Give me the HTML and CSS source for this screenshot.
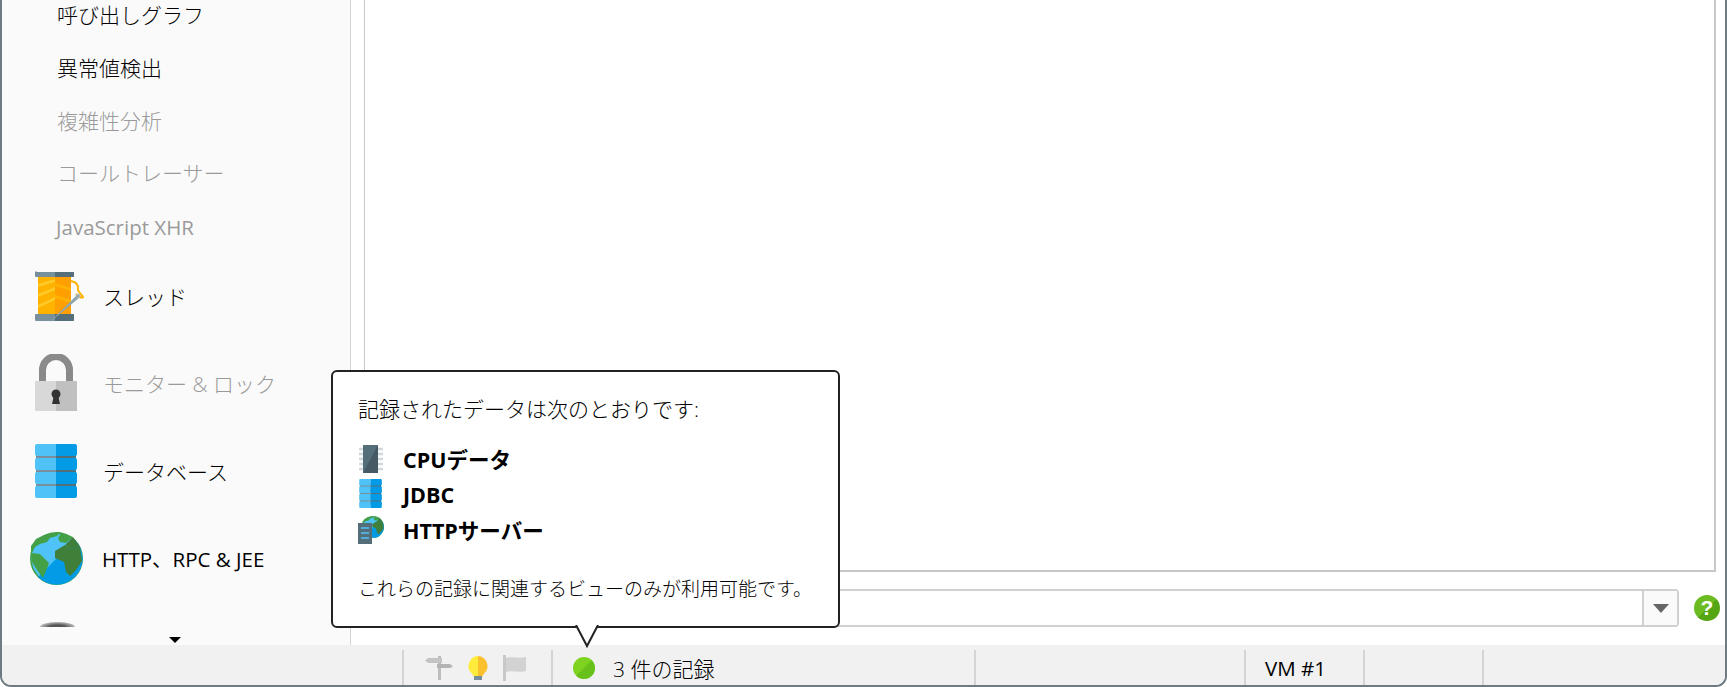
FILE: index.html
```html
<!DOCTYPE html>
<html lang="ja">
<head>
<meta charset="utf-8">
<title>Profiler</title>
<link rel="stylesheet" href="styles.css">
</head>
<body>
<svg class="defs" width="0" height="0">
  <defs>
    <symbol id="db" viewBox="0 0 42 54">
      <rect x="1" y="8" width="20" height="40" fill="#78909c"/>
      <rect x="21" y="8" width="20" height="40" fill="#546e7a"/>
      <g id="dbslabs">
        <path d="M2 0H21V12H2a2 2 0 0 1-2-2V2a2 2 0 0 1 2-2z" fill="#4fc3f7"/>
        <path d="M21 0H40a2 2 0 0 1 2 2V10a2 2 0 0 1-2 2H21z" fill="#039be5"/>
        <path d="M2 14H21V26H2a2 2 0 0 1-2-2V16a2 2 0 0 1 2-2z" fill="#4fc3f7"/>
        <path d="M21 14H40a2 2 0 0 1 2 2V24a2 2 0 0 1-2 2H21z" fill="#039be5"/>
        <path d="M2 28H21V40H2a2 2 0 0 1-2-2V30a2 2 0 0 1 2-2z" fill="#4fc3f7"/>
        <path d="M21 28H40a2 2 0 0 1 2 2V38a2 2 0 0 1-2 2H21z" fill="#039be5"/>
        <path d="M2 42H21V54H2a2 2 0 0 1-2-2V44a2 2 0 0 1 2-2z" fill="#4fc3f7"/>
        <path d="M21 42H40a2 2 0 0 1 2 2V52a2 2 0 0 1-2 2H21z" fill="#039be5"/>
      </g>
    </symbol>
    <symbol id="globe" viewBox="0 0 53 53">
      <circle cx="26.5" cy="26.5" r="26.5" fill="#43a047"/>
      <circle cx="26.5" cy="26.5" r="25" fill="#4fc3f7"/>
      <path d="M45 8A25.500 25.500 0 0 1 8 45z" fill="#039be5"/>
      <path d="M14 3L31 0L27 4L20 6L17 10L10 12L5 15L3 19L1 21L1 14L6 7z" fill="#43a047"/>
      <path d="M1 21L10 22L19 31L18 34L13 46L7 38L2 30z" fill="#43a047"/>
      <path d="M31 1L43 5L36 11L30 10L28 6z" fill="#43a047"/>
      <path d="M25 19L35 13L40 17L50 15L52 29L46 38L40 44L36 40L34 30L25 26z" fill="#3f7f3a"/>
      <path d="M43 5L50 15L40 17L35 13z" fill="#3f7f3a"/>
    </symbol>
  </defs>
</svg>

<div class="window">
  <div class="body-row">
    <aside class="sidebar">
      <ul class="nav">
        <li class="sub">呼び出しグラフ</li>
        <li class="sub">異常値検出</li>
        <li class="sub off">複雑性分析</li>
        <li class="sub off">コールトレーサー</li>
        <li class="sub off latin">JavaScript XHR</li>
        <li class="group">
          <svg class="gicon" width="50" height="52" viewBox="0 0 50 52">
            <rect x="3" y="7" width="17" height="37" fill="#ffb300"/>
            <rect x="20" y="7" width="16" height="37" fill="#ffa000"/>
            <path d="M3 14L20 9V12L3 17zM3 24L20 17V20L3 27zM3 35L20 27V30L3 38z" fill="#ffca28"/>
            <path d="M20 13L36 18V21L20 16zM20 25L36 30V33L20 28z" fill="#ffb300"/>
            <path d="M2 2H39V6a1 1 0 0 1-1 1H1a1 1 0 0 1-1-1V3a1 1 0 0 1 2-1z" fill="#78909c"/>
            <path d="M20 2H38a1 1 0 0 1 1 1V6a1 1 0 0 1-1 1H20z" fill="#546e7a"/>
            <path d="M1 44H38a1 1 0 0 1 1 1V50a1 1 0 0 1-1 1H1a1 1 0 0 1-1-1V45a1 1 0 0 1 1-1z" fill="#78909c"/>
            <path d="M20 44H38a1 1 0 0 1 1 1V50a1 1 0 0 1-1 1H20z" fill="#546e7a"/>
            <path d="M36 11C41 12 44 15 43 20C44 23 47 25 48 27C46 29 43 26 41 24" fill="none" stroke="#ffb300" stroke-width="2"/>
            <path d="M14 53L42 25L45 24L44 28z" fill="#90a4ae"/>
            <circle cx="43" cy="26" r="2" fill="none" stroke="#b0bec5" stroke-width="1"/>
          </svg>
          <span>スレッド</span>
        </li>
        <li class="group off">
          <svg class="gicon" width="50" height="58" viewBox="0 0 50 58">
            <path d="M7.500 27V16A13.500 13.500 0 0 1 34.500 16V27" fill="none" stroke="#8a8a8a" stroke-width="7"/>
            <rect x="0" y="27" width="21" height="30" fill="#d8d8d8"/>
            <rect x="21" y="27" width="21" height="30" fill="#c0c0c0"/>
            <circle cx="21" cy="40" r="4.500" fill="#333"/>
            <path d="M19 41H23L25 50H17z" fill="#333"/>
          </svg>
          <span>モニター &amp; ロック</span>
        </li>
        <li class="group">
          <svg class="gicon" width="50" height="54"><use href="#db" width="42" height="54"/></svg>
          <span>データベース</span>
        </li>
        <li class="group wide">
          <svg class="gicon" width="53" height="53"><use href="#globe" width="53" height="53"/></svg>
          <span>HTTP、RPC &amp; JEE</span>
        </li>
        <li class="group clipped">
          <div class="peek"></div>
        </li>
      </ul>
      <div class="more"></div>
    </aside>
    <main class="content">
      <div class="panel"></div>
      <div class="filter-row">
        <div class="combo">
          <div class="combo-field"></div>
          <div class="combo-btn"><i class="caret"></i></div>
        </div>
        <div class="help">?</div>
      </div>
    </main>
  </div>

  <footer class="status">
    <div class="cell c-blank"></div>
    <div class="cell c-tools">
      <svg width="28" height="24" viewBox="0 0 28 24">
        <rect x="13" y="0" width="3" height="24" fill="#bdbdbd"/>
        <path d="M3 2H17V7H3L0 4.500z" fill="#c4c4c4"/>
        <path d="M12 8H25L28 10.500L25 12H12z" fill="#b4b4b4"/>
      </svg>
      <svg width="20" height="24" viewBox="0 0 20 24">
        <path d="M10 0A10 10 0 0 0 4 17.500L6 21H10z" fill="#ffeb3b"/>
        <path d="M10 0A10 10 0 0 1 16 17.500L14 21H10z" fill="#fbc02d"/>
        <rect x="6" y="20" width="8" height="4" fill="#78909c"/>
      </svg>
      <svg width="23" height="26" viewBox="0 0 23 26">
        <rect x="0" y="0" width="3" height="26" fill="#c8c8c8"/>
        <path d="M3 3C9 1 15 4 23 2V16C15 18 9 15 3 17z" fill="#d2d2d2"/>
      </svg>
    </div>
    <div class="cell c-record">
      <svg width="22" height="22" viewBox="0 0 22 22">
        <circle cx="11" cy="11" r="11" fill="#7ed321"/>
        <path d="M18.800 3.200A11 11 0 0 1 3.200 18.800z" fill="#68c01a"/>
      </svg>
      <span>3 件の記録</span>
    </div>
    <div class="cell c-wide"></div>
    <div class="cell c-vm">VM #1</div>
    <div class="cell c-vm"></div>
    <div class="cell c-last"></div>
  </footer>

  <div class="popup">
    <p class="lead">記録されたデータは次のとおりです:</p>
    <ul class="rec-list">
      <li>
        <svg width="26" height="30" viewBox="0 0 26 30">
          <path d="M1 5H25M1 10H25M1 15H25M1 20H25M1 25H25" stroke="#cfd8dc" stroke-width="2.500"/>
          <rect x="5" y="1" width="15" height="28" fill="#546e7a"/>
          <path d="M20 1V29H5z" fill="#455a64"/>
        </svg>
        <b>CPUデータ</b>
      </li>
      <li>
        <svg width="26" height="30"><use href="#db" x="1" width="23" height="29"/></svg>
        <b>JDBC</b>
      </li>
      <li>
        <svg width="26" height="30" viewBox="0 0 26 30">
          <use href="#globe" x="4" y="1" width="22" height="22"/>
          <rect x="0" y="8" width="14" height="21" fill="#546e7a"/>
          <path d="M3 13H11M3 18H11M3 23H11" stroke="#4fc3f7" stroke-width="1.500"/>
        </svg>
        <b>HTTPサーバー</b>
      </li>
    </ul>
    <p class="foot">これらの記録に関連するビューのみが利用可能です。</p>
    <svg class="tail" width="26" height="24" viewBox="0 0 26 24">
      <path d="M2 0L13 21L24 0" fill="#fff" stroke="#222" stroke-width="2"/>
    </svg>
  </div>
</div>
</body>
</html>
```

FILE: styles.css
```css
* {
  box-sizing: border-box;
}

html, body {
  margin: 0;
  height: 100%;
  overflow: hidden;
}

body {
  font-family: "Open Sans", "Noto Sans CJK JP", sans-serif;
  font-size: 21px;
  font-weight: 300;
  color: #000;
  background: #fff;
}

.defs {
  position: absolute;
}

.window {
  position: relative;
  height: 687px;
  display: flex;
  flex-direction: column;
  border: 2px solid #6f7b82;
  border-top: none;
  border-radius: 0 0 11px 11px;
  overflow: hidden;
}

.body-row {
  flex: 1;
  display: flex;
  min-height: 0;
}

/* sidebar */
.sidebar {
  position: relative;
  width: 349px;
  background: #fafafa;
  border-right: 1px solid #d4d4d4;
  overflow: hidden;
}

.nav {
  list-style: none;
  margin: -10px 0 0;
  padding: 0;
}

.sub {
  height: 52.800px;
  padding-left: 55px;
  line-height: 51px;
  white-space: nowrap;
}

.sub.latin {
  height: 51px;
  padding-left: 54px;
  font-size: 20.500px;
  font-weight: 400;
  line-height: 52px;
}

.off {
  color: #9a9a9a;
}

.group {
  height: 87.500px;
  display: flex;
  align-items: center;
  padding-left: 33px;
  white-space: nowrap;
}

.group .gicon {
  flex: none;
  margin-right: 18px;
}

.group.wide {
  padding-left: 28px;
  font-weight: 400;
  font-size: 20.500px;
}

.group.wide .gicon {
  margin-right: 19px;
}

.clipped {
  align-items: flex-start;
  padding-top: 20px;
}

.peek {
  width: 35px;
  height: 5px;
  margin-left: 5px;
  border-radius: 50% 50% 0 0 / 100% 100% 0 0;
  background: radial-gradient(ellipse at 50% 100%, #555 30%, #bbb 70%, #eee);
}

.more {
  position: absolute;
  left: 167px;
  bottom: 2px;
  border-left: 6px solid transparent;
  border-right: 6px solid transparent;
  border-top: 6px solid #000;
}

/* right side */
.content {
  flex: 1;
  min-width: 0;
  display: flex;
  flex-direction: column;
  padding: 0 5px 18px 13px;
  background: #fff;
}

.panel {
  flex: 1;
  margin-right: 4px;
  border: solid #c8c8c8;
  border-width: 0 2px 2px 1px;
}

.filter-row {
  display: flex;
  align-items: center;
  margin-top: 17px;
}

.combo {
  flex: 1;
  height: 38px;
  display: flex;
  margin-right: 15px;
  border: 2px solid #d0d0d0;
  border-radius: 4px;
}

.combo-field {
  flex: 1;
}

.combo-btn {
  width: 35px;
  display: flex;
  align-items: center;
  justify-content: center;
  background: #fafafa;
  border-left: 2px solid #d0d0d0;
}

.caret {
  border-left: 8px solid transparent;
  border-right: 8px solid transparent;
  border-top: 9px solid #666;
}

.help {
  width: 26px;
  height: 26px;
  border-radius: 50%;
  background: linear-gradient(135deg, #6cbb20 50%, #55a514 50%);
  color: #fff;
  font-family: "Liberation Sans", sans-serif;
  font-size: 21px;
  font-weight: 700;
  line-height: 26px;
  text-align: center;
}

/* status bar */
.status {
  height: 40px;
  flex: none;
  display: flex;
  padding-top: 5px;
  background: #f1f1f1;
}

.cell {
  display: flex;
  align-items: center;
  border-left: 2px solid #d4d4d4;
  white-space: nowrap;
}

.c-blank {
  width: 400px;
  border-left: none;
}

.c-tools {
  width: 149px;
  gap: 15px;
  padding-left: 21px;
}

.c-record {
  width: 423px;
  padding-left: 20px;
}

.c-record span {
  margin-left: 18px;
}

.c-wide {
  width: 270px;
}

.c-vm {
  width: 119px;
  padding-left: 19px;
  font-size: 20.500px;
  font-weight: 400;
}

.c-last {
  flex: 1;
}

/* popup over the sidebar and status bar */
.popup {
  position: absolute;
  left: 329px;
  top: 370px;
  width: 509px;
  height: 258px;
  padding: 22px 25px 0;
  background: #fff;
  border: 2px solid #222;
  border-radius: 6px;
}

.lead, .foot {
  margin: 0;
  line-height: 30px;
  white-space: nowrap;
}

.rec-list {
  list-style: none;
  margin: 17px 0 0;
  padding: 0;
}

.rec-list li {
  height: 35.500px;
  display: flex;
  align-items: center;
}

.rec-list svg {
  flex: none;
  margin-right: 19px;
}

.rec-list b {
  font-size: 21.500px;
  font-weight: 700;
}

.foot {
  margin-top: 26px;
  font-size: 19px;
}

.tail {
  position: absolute;
  left: 241px;
  bottom: -23px;
}
```
